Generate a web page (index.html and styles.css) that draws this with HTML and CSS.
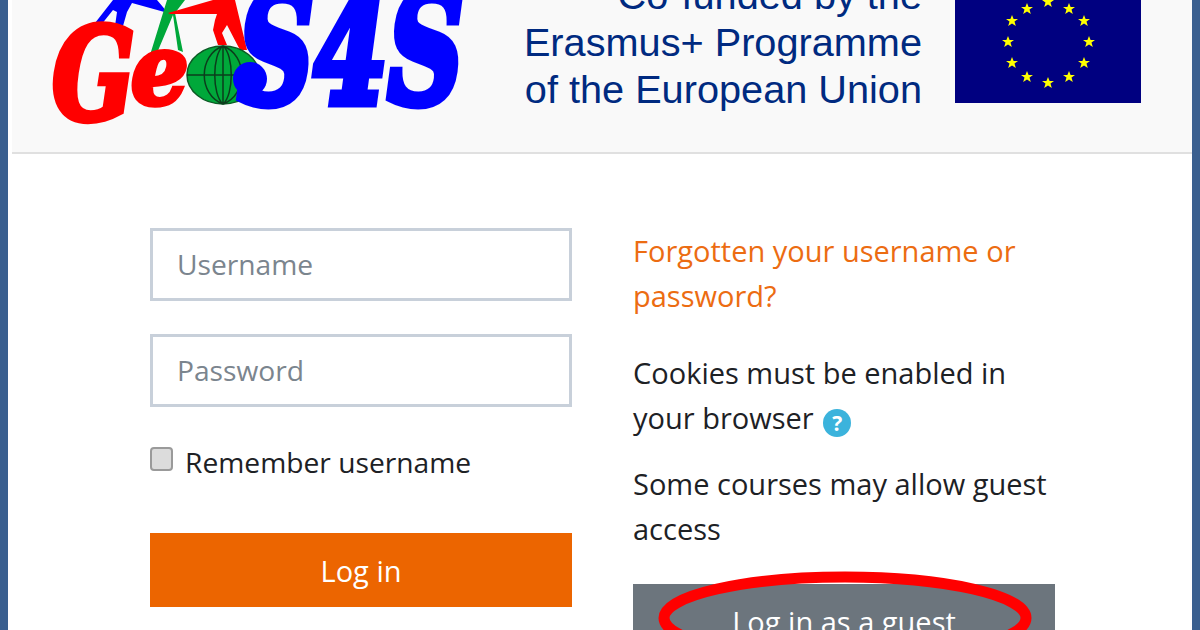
FILE: index.html
```html
<!DOCTYPE html>
<html lang="en">
<head>
  <meta charset="UTF-8">
  <title>Log in</title>
  <link rel="stylesheet" href="styles.css">
</head>
<body>
  <div class="page">
    <div class="top-banner">
      <svg class="logo" viewBox="40 0 430 153" width="430" height="153">
        <path d="M88 32 L113 0 L157 0 L168 13 L132 3 L127 12 L123 26 L115 26 L117 12 L113 10 L97 30 Z" fill="#0000ff"/>
        <path d="M150 55 L167 0 L185 0 L175 13 L183 52 L178 50 L173 15 L157 53 Z" fill="#00a83a"/>
        <path d="M168 13 L213 0 L235 0 L247 50 L240 50 L227 25 L222 33 L227 45 L218 45 L213 30 L215 20 L217 14 L170 14 Z" fill="#ff0000"/>
        <text class="logo-g" transform="translate(52 119) scale(.97 1.28)" fill="#ff0000">G</text>
        <text class="logo-e" transform="translate(131 104) scale(.98 1.05)" fill="#ff0000">e</text>
        <ellipse cx="223" cy="75" rx="36" ry="29" fill="#00a83a" stroke="#0b5a24" stroke-width="1.5"/>
        <path d="M223 46 V104 M187 75 H259 M223 46 C198 55 198 95 223 104 M223 46 C248 55 248 95 223 104 M223 46 C212 55 212 95 223 104 M223 46 C234 55 234 95 223 104" fill="none" stroke="#0b3d1c" stroke-width="1.5"/>
        <text class="logo-s4s" transform="translate(238 103) scale(.91 1.3)" fill="#0000ff">S4S</text>
        <circle cx="250" cy="79" r="17" fill="#0000ff"/>
      </svg>
      <div class="cofund">Co-funded by the<br>Erasmus+ Programme<br>of the European Union</div>
      <svg class="eu-flag" viewBox="955 0 186 103" width="186" height="103">
        <rect x="955" y="0" width="186" height="103" fill="#000080"/>
        <path fill="#ffff00" d="M1048 -4l1.6 4h4.4l-3.5 2.6 1.3 4.4-3.8-2.6-3.8 2.6 1.3-4.4-3.5-2.6h4.4z"/>
        <path fill="#ffff00" d="M1027 3l1.6 4h4.4l-3.5 2.6 1.3 4.4-3.8-2.6-3.8 2.6 1.3-4.4-3.5-2.6h4.4z"/>
        <path fill="#ffff00" d="M1069 3l1.6 4h4.4l-3.5 2.6 1.3 4.4-3.8-2.6-3.8 2.6 1.3-4.4-3.5-2.6h4.4z"/>
        <path fill="#ffff00" d="M1012 15l1.6 4h4.4l-3.5 2.6 1.3 4.4-3.8-2.6-3.8 2.6 1.3-4.4-3.5-2.6h4.4z"/>
        <path fill="#ffff00" d="M1084 15l1.6 4h4.4l-3.5 2.6 1.3 4.4-3.8-2.6-3.8 2.6 1.3-4.4-3.5-2.6h4.4z"/>
        <path fill="#ffff00" d="M1008 36l1.6 4h4.4l-3.5 2.6 1.3 4.4-3.8-2.6-3.8 2.6 1.3-4.4-3.5-2.6h4.4z"/>
        <path fill="#ffff00" d="M1089 36l1.6 4h4.4l-3.5 2.6 1.3 4.4-3.8-2.6-3.8 2.6 1.3-4.4-3.5-2.6h4.4z"/>
        <path fill="#ffff00" d="M1012 57l1.6 4h4.4l-3.5 2.6 1.3 4.4-3.8-2.6-3.8 2.6 1.3-4.4-3.5-2.6h4.4z"/>
        <path fill="#ffff00" d="M1084 57l1.6 4h4.4l-3.5 2.6 1.3 4.4-3.8-2.6-3.8 2.6 1.3-4.4-3.5-2.6h4.4z"/>
        <path fill="#ffff00" d="M1027 71l1.6 4h4.4l-3.5 2.6 1.3 4.4-3.8-2.6-3.8 2.6 1.3-4.4-3.5-2.6h4.4z"/>
        <path fill="#ffff00" d="M1069 71l1.6 4h4.4l-3.5 2.6 1.3 4.4-3.8-2.6-3.8 2.6 1.3-4.4-3.5-2.6h4.4z"/>
        <path fill="#ffff00" d="M1048 77l1.6 4h4.4l-3.5 2.6 1.3 4.4-3.8-2.6-3.8 2.6 1.3-4.4-3.5-2.6h4.4z"/>
      </svg>
    </div>

    <div class="login-wrap">
      <div class="login-col">
        <div class="field">Username</div>
        <div class="field">Password</div>
        <div class="remember">
          <span class="check-box"></span>
          <span>Remember username</span>
        </div>
        <button class="btn-login">Log in</button>
      </div>

      <div class="info-col">
        <p class="forgot">Forgotten your username or password?</p>
        <p>Cookies must be enabled in your browser <span class="help-icon">?</span></p>
        <p>Some courses may allow guest access</p>
        <div class="guest-box">
          <button class="btn-guest">Log in as a guest</button>
          <svg class="red-ring" viewBox="0 0 382 94" width="382" height="94">
            <ellipse cx="191" cy="47" rx="181" ry="41" fill="none" stroke="#ff0000" stroke-width="11"/>
          </svg>
        </div>
      </div>
    </div>
  </div>
</body>
</html>
```

FILE: styles.css
```css
html, body {
  height: 100%;
}

body {
  margin: 0;
  padding: 0 8px;
  background: #3a5f8f;
  font-family: 'Open Sans', sans-serif;
  color: #1d2125;
  overflow: hidden;
}

.page {
  height: 630px;
  background: white;
  padding-left: 4px;
  overflow: hidden;
}

.top-banner {
  display: flex;
  align-items: flex-start;
  height: 152px;
  background: #f9f9f9;
  border-bottom: 2px solid #e0e0e0;
  overflow: hidden;
}

.logo {
  flex: none;
  margin-left: 28px;
}

.logo-g, .logo-e, .logo-s4s {
  font-family: 'DejaVu Serif', serif;
  font-weight: bold;
  font-style: italic;
}

.logo-g {
  font-size: 100px;
  stroke: #ff0000;
  stroke-width: 5px;
}

.logo-e {
  font-size: 92px;
  stroke: #ff0000;
  stroke-width: 5px;
}

.logo-s4s {
  font-size: 116px;
  stroke: #0000ff;
  stroke-width: 7px;
}

.cofund {
  flex: none;
  width: 432px;
  margin-left: 20px;
  margin-top: -28px;
  text-align: right;
  font-family: 'Liberation Sans', sans-serif;
  font-size: 39.7px;
  line-height: 47px;
  white-space: nowrap;
  color: #002a80;
}

.eu-flag {
  flex: none;
  margin-left: 33px;
}

.login-wrap {
  display: grid;
  grid-template-columns: 422px 422px;
  column-gap: 61px;
  padding: 74px 0 0 138px;
}

.login-col {
  display: flex;
  flex-direction: column;
}

.field {
  height: 67px;
  border: 3px solid #c8d0da;
  padding-left: 24px;
  margin-bottom: 33px;
  font-size: 28.2px;
  line-height: 67px;
  color: #7b858e;
}

.remember {
  display: flex;
  align-items: center;
  gap: 12px;
  margin-top: -1px;
  font-size: 28.2px;
  line-height: 46px;
}

.check-box {
  width: 19px;
  height: 20px;
  margin-bottom: 6px;
  background: #dcdcdc;
  border: 2px solid #9a9a9a;
  border-radius: 4px;
}

.btn-login {
  height: 74px;
  margin-top: 48px;
  background: #ec6500;
  color: white;
  border: none;
  font-family: inherit;
  font-size: 29px;
}

.info-col p {
  margin: 0 0 21px;
  font-size: 29px;
  line-height: 45px;
}

.info-col .forgot {
  color: #ec6c12;
  margin-bottom: 32px;
}

.help-icon {
  display: inline-block;
  width: 28px;
  height: 28px;
  margin-left: 2px;
  border-radius: 50%;
  background: #3bb3dc;
  color: white;
  font-size: 21px;
  font-weight: bold;
  line-height: 28px;
  text-align: center;
  vertical-align: -2px;
}

.guest-box {
  position: relative;
  margin-top: 33px;
}

.btn-guest {
  display: block;
  width: 100%;
  height: 74px;
  background: #6c757d;
  color: white;
  border: none;
  font-family: inherit;
  font-size: 29px;
}

.red-ring {
  position: absolute;
  left: 21px;
  top: -13px;
}
```
